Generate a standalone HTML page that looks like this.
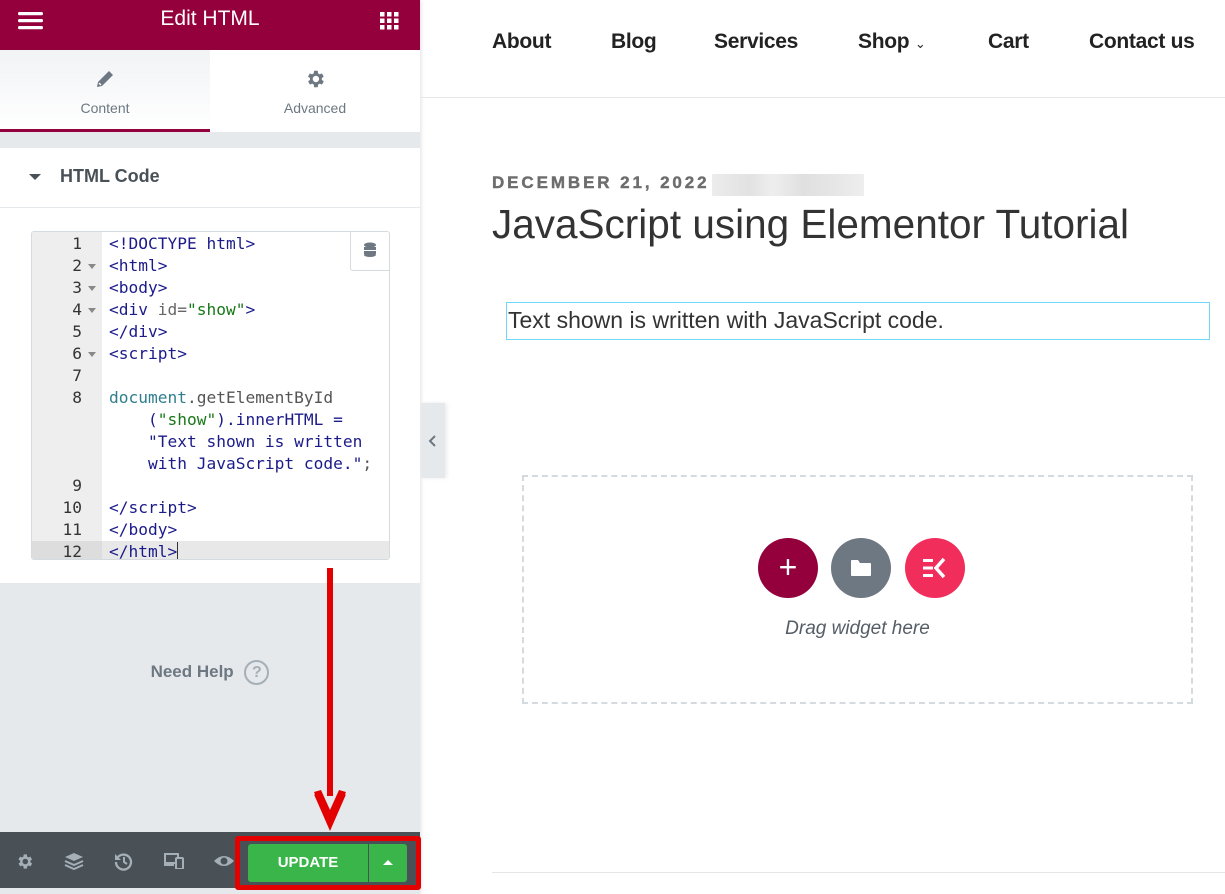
<!DOCTYPE html>
<html><head><meta charset="utf-8"><style>
*{box-sizing:border-box;margin:0;padding:0}
body{width:1225px;height:894px;overflow:hidden;background:#fff;font-family:"Liberation Sans",sans-serif;position:relative}
.panel{position:absolute;left:0;top:0;width:420px;height:894px;background:#e6e9ec;box-shadow:1px 0 4px rgba(0,0,0,.12)}
.hdr{position:absolute;left:0;top:0;width:420px;height:50px;background:#93003c;color:#fff}
.hdr .t{position:absolute;left:0;right:0;top:7px;text-align:center;font-size:21px}
.tabs{position:absolute;top:50px;left:0;width:420px;height:82px;background:#fff}
.tab{position:absolute;top:0;width:210px;height:82px;text-align:center;color:#6d7882;font-size:14px}
.tab1{left:0;background:linear-gradient(#f1f3f5,#fff);border-bottom:3px solid #93003c}
.tab span{position:absolute;left:0;right:0;top:50px}
.sec{position:absolute;top:148px;left:0;width:420px;height:435px;background:#fff}
.sech{height:60px;border-bottom:1px solid #e6e9ec;position:relative}
.sech b{position:absolute;left:60px;top:18px;font-size:18px;color:#495157}
.sech i{position:absolute;left:29px;top:26px;border-left:6px solid transparent;border-right:6px solid transparent;border-top:6px solid #495157}
.ed{position:absolute;left:31px;top:83px;width:359px;height:329px;border:1px solid #d5dadf;border-radius:3px;background:#fff;overflow:hidden;font-family:"DejaVu Sans Mono","Liberation Mono",monospace;font-size:16.2px}
.gut{position:absolute;left:0;top:0;width:70px;height:100%;background:#eeeeee}
.ln{position:absolute;left:0;width:100%;height:22px;line-height:22px}
.ln .n{position:absolute;left:0;width:50px;text-align:right;color:#333}
.ln .f{position:absolute;left:56px;top:9px;border-left:4px solid transparent;border-right:4px solid transparent;border-top:5px solid #888}
.ln .c{position:absolute;left:77px;white-space:pre;color:#1b1b8a}
.g{color:#666}.s{color:#187818}.k{color:#2f7e8e}.m{color:#555}
.cur{background:#e8e8e8}
.help{position:absolute;top:660px;left:0;width:420px;text-align:center;color:#6d7882;font-size:17px;font-weight:bold}
.bar{position:absolute;left:0;top:832px;width:420px;height:56px;background:#495157}
.upd{position:absolute;left:235px;top:836px;width:186px;height:54px;border:5px solid #e30000;border-radius:3px;background:#495157}
.btn{position:absolute;left:8px;top:3px;width:120px;height:38px;background:#39b54a;border-radius:3px 0 0 3px;color:#fff;font-weight:bold;font-size:15px;text-align:center;line-height:38px}
.btn2{position:absolute;left:129px;top:3px;width:38px;height:38px;background:#39b54a;border-radius:0 3px 3px 0}
.nav{position:absolute;top:30px;font-family:"Liberation Sans Narrow","Liberation Sans",sans-serif;font-size:21px;color:#222;font-weight:bold;letter-spacing:-.3px}
</style></head><body>
<div class="panel">
 <div class="hdr">
  <svg style="position:absolute;left:18px;top:12px" width="25" height="18"><rect y="0" width="25" height="3.2" rx="1.5" fill="#fff"/><rect y="7" width="25" height="3.2" rx="1.5" fill="#fff"/><rect y="14" width="25" height="3.2" rx="1.5" fill="#fff"/></svg>
  <div class="t">Edit HTML</div>
  <svg style="position:absolute;left:380px;top:12px" width="20" height="18" fill="#fff"><rect x="0" y="0" width="4.5" height="4.5"/><rect x="7" y="0" width="4.5" height="4.5"/><rect x="14" y="0" width="4.5" height="4.5"/><rect x="0" y="6.5" width="4.5" height="4.5"/><rect x="7" y="6.5" width="4.5" height="4.5"/><rect x="14" y="6.5" width="4.5" height="4.5"/><rect x="0" y="13" width="4.5" height="4.5"/><rect x="7" y="13" width="4.5" height="4.5"/><rect x="14" y="13" width="4.5" height="4.5"/></svg>
 </div>
 <div class="tabs">
  <div class="tab tab1"><svg style="position:absolute;left:95px;top:19px" width="20" height="20"><path d="M2 18 L3 13 L14 2 L18 6 L7 17 Z" fill="#6d7882"/><path d="M4 14 L6 16" stroke="#f5f6f7" stroke-width="1.5"/></svg><span>Content</span></div>
  <div class="tab" style="left:210px"><svg style="position:absolute;left:94px;top:18px" width="22" height="22" viewBox="0 0 24 24"><path fill="#6d7882" d="M19.4 13a7.5 7.5 0 0 0 0-2l2.1-1.6-2-3.5-2.5 1a7.5 7.5 0 0 0-1.700-1L15 3h-4l-.4 2.9a7.5 7.5 0 0 0-1.7 1l-2.5-1-2 3.5L6.6 11a7.5 7.5 0 0 0 0 2l-2.1 1.6 2 3.5 2.5-1a7.5 7.5 0 0 0 1.7 1L11 21h4l.4-2.9a7.5 7.5 0 0 0 1.7-1l2.5 1 2-3.5zM13 15.5a3.5 3.5 0 1 1 0-7 3.5 3.5 0 0 1 0 7z"/></svg><span>Advanced</span></div>
 </div>
 <div class="sec">
  <div class="sech"><i></i><b>HTML Code</b></div>
  <div class="ed">
   <div class="gut"></div>
   <div class="ln" style="top:1px"><span class="n">1</span><span class="c g">&lt;!DOCTYPE html&gt;</span></div>
   <div class="ln" style="top:23px"><span class="n">2</span><i class="f"></i><span class="c">&lt;html&gt;</span></div>
   <div class="ln" style="top:45px"><span class="n">3</span><i class="f"></i><span class="c">&lt;body&gt;</span></div>
   <div class="ln" style="top:67px"><span class="n">4</span><i class="f"></i><span class="c">&lt;div <span class="g">id=</span><span class="s">"show"</span>&gt;</span></div>
   <div class="ln" style="top:89px"><span class="n">5</span><span class="c">&lt;/div&gt;</span></div>
   <div class="ln" style="top:111px"><span class="n">6</span><i class="f"></i><span class="c">&lt;script&gt;</span></div>
   <div class="ln" style="top:133px"><span class="n">7</span></div>
   <div class="ln" style="top:155px"><span class="n">8</span><span class="c"><span class="k">document</span><span class="m">.getElementById</span></span></div>
   <div class="ln" style="top:177px"><span class="c m">    (<span class="s">"show"</span>).innerHTML =</span></div>
   <div class="ln" style="top:199px"><span class="c s">    "Text shown is written</span></div>
   <div class="ln" style="top:221px"><span class="c s">    with JavaScript code."<span class="m">;</span></span></div>
   <div class="ln" style="top:243px"><span class="n">9</span></div>
   <div class="ln" style="top:265px"><span class="n">10</span><span class="c">&lt;/script&gt;</span></div>
   <div class="ln" style="top:287px"><span class="n">11</span><span class="c">&lt;/body&gt;</span></div>
   <div class="ln cur" style="top:309px"><span class="n" style="background:#ddd;width:70px;padding-right:20px">12</span><span class="c">&lt;/html&gt;<span style="border-left:1px solid #333"></span></span></div>
   <div style="position:absolute;right:-1px;top:-1px;width:40px;height:40px;border:1px solid #d5dadf;background:#fff;border-radius:0 3px 0 3px"><svg style="position:absolute;left:12px;top:10px" width="14" height="16"><ellipse cx="7" cy="3" rx="6" ry="2.5" fill="#6d7882"/><rect x="1" y="5" width="12" height="3" fill="#6d7882"/><rect x="1" y="9" width="12" height="3" fill="#6d7882"/><ellipse cx="7" cy="13" rx="6" ry="2" fill="#6d7882"/></svg></div>
  </div>
 </div>
 <div class="help">Need Help <span style="display:inline-block;width:25px;height:25px;border:2px solid #a4afb7;border-radius:50%;font-size:16px;line-height:21px;color:#a4afb7;vertical-align:middle;margin-left:6px">?</span></div>
 <div class="bar">
  <svg style="position:absolute;left:15px;top:20px" width="19" height="19" viewBox="0 0 24 24"><path fill="#a4afb7" d="M19.4 13a7.5 7.5 0 0 0 0-2l2.1-1.6-2-3.5-2.5 1a7.5 7.5 0 0 0-1.7-1L15 3h-4l-.4 2.9a7.5 7.5 0 0 0-1.7 1l-2.5-1-2 3.5L6.6 11a7.5 7.5 0 0 0 0 2l-2.1 1.6 2 3.5 2.5-1a7.5 7.5 0 0 0 1.7 1L11 21h4l.4-2.9a7.5 7.5 0 0 0 1.7-1l2.5 1 2-3.5zM13 15.5a3.5 3.5 0 1 1 0-7 3.5 3.5 0 0 1 0 7z"/></svg>
  <svg style="position:absolute;left:64px;top:20px" width="20" height="18"><path d="M10 1 L19 5 L10 9 L1 5Z" fill="#a4afb7"/><path d="M1 9 L10 13 L19 9 M1 13 L10 17 L19 13" stroke="#a4afb7" stroke-width="2" fill="none"/></svg>
  <svg style="position:absolute;left:114px;top:20px" width="19" height="19"><path d="M4 5 A7.5 7.5 0 1 1 2 10" stroke="#a4afb7" stroke-width="2.3" fill="none"/><path d="M1 2 L1 8 L7 8Z" fill="#a4afb7"/><path d="M10 5 V10 L13 12" stroke="#a4afb7" stroke-width="2" fill="none"/></svg>
  <svg style="position:absolute;left:164px;top:21px" width="20" height="16"><rect x="1" y="1" width="13" height="9" stroke="#a4afb7" stroke-width="2" fill="none"/><rect x="0" y="11" width="10" height="2" fill="#a4afb7"/><rect x="12" y="5" width="7" height="11" rx="1" stroke="#a4afb7" stroke-width="2" fill="#495157"/></svg>
  <svg style="position:absolute;left:213px;top:22px" width="22" height="14"><path d="M1 7 Q11 -3 21 7 Q11 17 1 7Z" fill="#a4afb7"/><circle cx="11" cy="7" r="3.5" fill="#495157"/></svg>
 </div>
 <div class="upd"><div class="btn">UPDATE</div><div class="btn2"><i style="position:absolute;left:14px;top:16px;border-left:5px solid transparent;border-right:5px solid transparent;border-bottom:5px solid #fff"></i></div></div>
</div>
<div style="position:absolute;left:421px;top:403px;width:24px;height:75px;background:#e6e9ec;box-shadow:2px 0 4px rgba(0,0,0,.08)"><svg style="position:absolute;left:6px;top:32px" width="10" height="12"><path d="M8 1 L3 6 L8 11" stroke="#6d7882" stroke-width="2" fill="none"/></svg></div>
<!-- arrow -->
<svg style="position:absolute;left:310px;top:568px" width="40" height="264"><rect x="17" y="0" width="6" height="228" fill="#e30000"/><path d="M4 224 L20 262 L36 224 L29 222 L20 242 L11 222Z" fill="#e30000"/><path d="M6 226 L20 258 L34 226" stroke="#e30000" stroke-width="4" fill="none"/></svg>
<!-- right -->
<div class="nav" style="left:492px">About</div>
<div class="nav" style="left:611px">Blog</div>
<div class="nav" style="left:714px">Services</div>
<div class="nav" style="left:858px">Shop <span style="font-size:13px;font-weight:normal">&#8964;</span></div>
<div class="nav" style="left:988px">Cart</div>
<div class="nav" style="left:1089px">Contact us</div>
<div style="position:absolute;left:421px;right:0;top:97px;height:1px;background:#e6e6e6"></div>
<div style="position:absolute;left:492px;top:173px;font-size:17px;font-weight:bold;letter-spacing:2.9px;color:#6d6d6d;-webkit-text-stroke:.4px #6d6d6d">DECEMBER 21, 2022</div>
<div style="position:absolute;left:712px;top:174px;width:152px;height:22px;background:linear-gradient(90deg,#ececec 0,#e2e2e2 25%,#eee 40%,#e0e0e0 60%,#e6e6e6 80%,#eee 100%)"></div>
<div style="position:absolute;left:492px;top:201px;font-size:40.5px;color:#333;letter-spacing:0">JavaScript using Elementor Tutorial</div>
<div style="position:absolute;left:506px;top:302px;width:704px;height:38px;border:1px solid #71d7f7;font-size:23px;color:#333;padding:4px 1px">Text shown is written with JavaScript code.</div>
<div style="position:absolute;left:522px;top:475px;width:671px;height:229px;border:2px dashed #d5dadf"></div>
<div style="position:absolute;left:758px;top:538px;width:60px;height:60px;border-radius:50%;background:#93003c;color:#fff;font-size:32px;text-align:center;line-height:58px">+</div>
<div style="position:absolute;left:831px;top:538px;width:60px;height:60px;border-radius:50%;background:#6d7882"><svg style="position:absolute;left:19px;top:21px" width="22" height="18"><path d="M1 2 Q1 1 2 1 L8 1 L10 4 L20 4 Q21 4 21 5 L21 16 Q21 17 20 17 L2 17 Q1 17 1 16Z" fill="#fff"/></svg></div>
<div style="position:absolute;left:905px;top:538px;width:60px;height:60px;border-radius:50%;background:#f12d5b"><svg style="position:absolute;left:17px;top:20px" width="26" height="20" fill="#fff"><rect x="1" y="1" width="10" height="3"/><rect x="1" y="8.5" width="10" height="3"/><rect x="1" y="16" width="10" height="3"/><path d="M22 1 L14 10 L22 19" stroke="#fff" stroke-width="3.5" fill="none"/></svg></div>
<div style="position:absolute;left:522px;width:671px;top:618px;text-align:center;font-size:19px;font-style:italic;color:#555d66">Drag widget here</div>
<div style="position:absolute;left:492px;right:0;top:872px;height:1px;background:#e6e6e6"></div>
</body></html>
